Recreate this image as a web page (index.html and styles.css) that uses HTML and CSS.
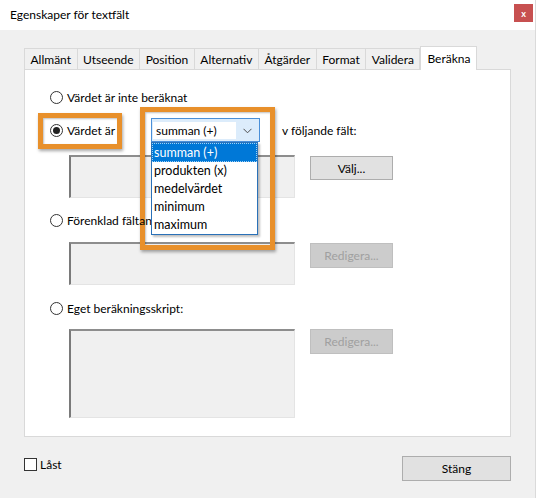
FILE: index.html
```html
<!DOCTYPE html>
<html lang="sv">
<head>
<meta charset="utf-8">
<title>Egenskaper för textfält</title>
<link rel="stylesheet" href="styles.css">
</head>
<body>
<div class="window">
  <div class="titlebar">
    <span class="title">Egenskaper för textfält</span>
    <span class="close">x</span>
  </div>
  <div class="content">
    <div class="tabs">
      <div class="tab">Allmänt</div>
      <div class="tab">Utseende</div>
      <div class="tab">Position</div>
      <div class="tab">Alternativ</div>
      <div class="tab">Åtgärder</div>
      <div class="tab">Format</div>
      <div class="tab">Validera</div>
      <div class="tab active">Beräkna</div>
    </div>
    <div class="panel">
      <div class="option row-first"><span class="radio"></span><span>Värdet är inte beräknat</span></div>
      <div class="value-row">
        <div class="option lead"><span class="radio checked"></span><span>Värdet är</span></div>
        <div class="select">
          <span class="select-value">summan (+)</span>
          <span class="select-arrow"><svg width="9" height="6" viewBox="0 0 9 6"><path d="M0.5 0.8 L4.5 4.8 L8.5 0.8" fill="none" stroke="#4d4d4d" stroke-width="1"/></svg></span>
          <ul class="dropdown">
            <li class="selected">summan (+)</li>
            <li>produkten (x)</li>
            <li>medelvärdet</li>
            <li>minimum</li>
            <li>maximum</li>
          </ul>
        </div>
        <span class="after">v följande fält:</span>
      </div>
      <div class="field f1"><div class="box"></div><div class="btn">Välj...</div></div>
      <div class="option row-gap raised"><span class="radio"></span><span>Förenklad fältanteckning:</span></div>
      <div class="field f2"><div class="box"></div><div class="btn disabled">Redigera...</div></div>
      <div class="option row-gap3"><span class="radio"></span><span>Eget beräkningsskript:</span></div>
      <div class="field f3"><div class="box tall"></div><div class="btn disabled">Redigera...</div></div>
    </div>
    <div class="footer">
      <div class="check"><span class="checkbox"></span><span>Låst</span></div>
      <div class="btn close-btn">Stäng</div>
    </div>
  </div>
  <div class="mark mark-a"></div>
  <div class="mark mark-b"></div>
</div>
</body>
</html>
```
FILE: styles.css
```css
html, body {
  margin: 0;
  padding: 0;
}
body {
  width: 536px;
  height: 498px;
  overflow: hidden;
  background: #f0f0f0;
  font-family: Lato, "Liberation Sans", sans-serif;
  font-size: 12px;
  color: #000;
}
.window {
  position: relative;
  width: 535px;
  height: 498px;
  border-right: 1px solid #dadada;
  background: #f0f0f0;
}
.titlebar {
  height: 30px;
  background: #fff;
  display: flex;
  align-items: center;
  justify-content: space-between;
  padding: 0 2px 0 10px;
}
.title {
  font-size: 12px;
  margin-top: -1px;
}
.close {
  width: 19px;
  height: 18px;
  background: #c75050;
  color: #fff;
  font-weight: bold;
  font-size: 9px;
  display: flex;
  align-items: center;
  justify-content: center;
  margin-top: -4px;
}
.content {
  padding: 17px 0 0 24px;
}
.tabs {
  display: flex;
  align-items: flex-end;
  height: 22px;
  position: relative;
  z-index: 1;
}
.tab {
  height: 19px;
  padding: 1px 5.5px 0 5.5px;
  border: 1px solid #d9d9d9;
  border-bottom: none;
  margin-right: -1px;
  display: flex;
  align-items: center;
  background: #f0f0f0;
  box-sizing: content-box;
}
.tab.active {
  height: 22px;
  margin-bottom: -1px;
  background: #fff;
  padding: 0 6px 1px 6px;
  margin-left: 1px;
}
.panel {
  width: 460px;
  height: 347px;
  border: 1px solid #d9d9d9;
  background: #fff;
  padding: 19px 0 0 25px;
  box-sizing: content-box;
}
.option {
  display: flex;
  align-items: center;
  height: 16px;
  gap: 4px;
}
.radio {
  width: 11px;
  height: 11px;
  border: 1px solid #333;
  border-radius: 50%;
  background: #fff;
  position: relative;
  flex: none;
}
.radio.checked::after {
  content: "";
  position: absolute;
  left: 2px;
  top: 2px;
  width: 7px;
  height: 7px;
  border-radius: 50%;
  background: #222;
}
.value-row {
  display: flex;
  align-items: center;
  height: 24px;
  margin-top: 13px;
}
.lead {
  width: 101px;
}
.select {
  position: relative;
  width: 105px;
  height: 22px;
  border: 1px solid #4a8fd8;
  background: #dcecfb;
  display: flex;
  align-items: center;
  padding: 0 1px;
}
.select-value {
  background: #fff;
  height: 17px;
  width: 80px;
  line-height: 17px;
  padding-left: 3px;
}
.select-arrow {
  flex: 1;
  display: flex;
  justify-content: center;
  align-items: center;
  padding-top: 1px;
}
.dropdown {
  position: absolute;
  left: -1px;
  top: 23px;
  width: 105px;
  margin: 0;
  padding: 0;
  list-style: none;
  background: #fff;
  border: 1px solid #2a71b8;
  z-index: 5;
  box-shadow: 2px 2px 2px rgba(0, 0, 0, 0.25);
}
.dropdown li {
  height: 18px;
  line-height: 18px;
  padding-left: 2px;
  font-size: 12.5px;
}
.dropdown li.selected {
  background: #0078d7;
  color: #fff;
  outline: 1px dotted #9fd0f5;
  outline-offset: -1px;
  height: 19px;
  line-height: 19px;
}
.after {
  margin-left: 22px;
}
.field {
  display: flex;
  align-items: flex-start;
  gap: 15px;
  padding-left: 19px;
  margin-top: 13px;
}
.f2 {
  margin-top: 14px;
}
.box {
  background: #f0f0f0;
  border-top: 2px solid #8d8d8d;
  border-left: 2px solid #7a7a7a;
  border-right: 1px solid #e4e4e4;
  border-bottom: 1px solid #e4e4e4;
  box-sizing: content-box;
  width: 223px;
  height: 40px;
}
.box.tall {
  height: 86px;
}
.btn {
  width: 81px;
  height: 22px;
  border: 1px solid #adadad;
  background: #e1e1e1;
  display: flex;
  align-items: center;
  justify-content: center;
  flex: none;
}
.f1 .btn,
.f2 .btn {
  margin-top: 1px;
}
.btn.disabled {
  background: #cccccc;
  border-color: #bfbfbf;
  color: #a0a0a0;
  height: 23px;
}
.row-gap {
  margin-top: 14px;
}
.row-gap3 {
  margin-top: 15px;
}
.raised {
  position: relative;
  z-index: 3;
}
.footer {
  display: flex;
  justify-content: space-between;
  align-items: flex-start;
  padding-top: 19px;
  width: 487px;
}
.check {
  display: flex;
  align-items: center;
  gap: 3px;
  margin-top: 1px;
}
.checkbox {
  width: 11px;
  height: 11px;
  border: 1px solid #333;
  background: #fff;
}
.close-btn {
  width: 107px;
  height: 23px;
}
.mark {
  position: absolute;
  border: 5px solid #e8902b;
  box-sizing: border-box;
  box-shadow: 1px 2px 3px rgba(0, 0, 0, 0.35), inset 1px 1px 2px rgba(0, 0, 0, 0.25);
  z-index: 2;
}
.mark-a {
  left: 38px;
  top: 113px;
  width: 84px;
  height: 36px;
}
.mark-b {
  left: 140px;
  top: 107px;
  width: 135px;
  height: 143px;
}
```
